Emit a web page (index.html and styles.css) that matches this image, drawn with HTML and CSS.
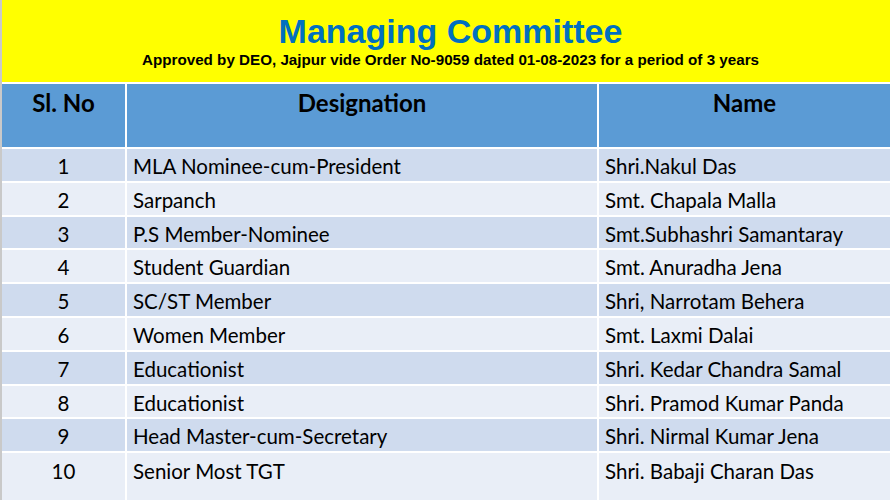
FILE: index.html
```html
<!DOCTYPE html>
<html>
<head>
<meta charset="utf-8">
<link rel="stylesheet" href="styles.css">
</head>
<body>
<div class="page">
  <header class="banner">
    <h1 class="title">Managing Committee</h1>
    <p class="subtitle">Approved by DEO, Jajpur vide Order No-9059 dated 01-08-2023 for a period of 3 years</p>
  </header>
  <div class="grid">
    <div class="th">Sl. No</div>
    <div class="th">Designation</div>
    <div class="th">Name</div>

    <div class="td num odd">1</div><div class="td odd">MLA Nominee-cum-President</div><div class="td odd">Shri.Nakul Das</div>
    <div class="td num even">2</div><div class="td even">Sarpanch</div><div class="td even">Smt. Chapala Malla</div>
    <div class="td num odd">3</div><div class="td odd">P.S Member-Nominee</div><div class="td odd">Smt.Subhashri Samantaray</div>
    <div class="td num even">4</div><div class="td even">Student Guardian</div><div class="td even">Smt. Anuradha Jena</div>
    <div class="td num odd">5</div><div class="td odd">SC/ST Member</div><div class="td odd">Shri, Narrotam Behera</div>
    <div class="td num even">6</div><div class="td even">Women Member</div><div class="td even">Smt. Laxmi Dalai</div>
    <div class="td num odd">7</div><div class="td odd">Educationist</div><div class="td odd">Shri. Kedar Chandra Samal</div>
    <div class="td num even">8</div><div class="td even">Educationist</div><div class="td even">Shri. Pramod Kumar Panda</div>
    <div class="td num odd">9</div><div class="td odd">Head Master-cum-Secretary</div><div class="td odd">Shri. Nirmal Kumar Jena</div>
    <div class="td num even last">10</div><div class="td even last">Senior Most TGT</div><div class="td even last">Shri. Babaji Charan Das</div>
  </div>
</div>
</body>
</html>
```
FILE: styles.css
```css
html, body {
  margin: 0;
  padding: 0;
  background: #ffffff;
}
.page {
  width: 888px;
  height: 500px;
  overflow: hidden;
  border-left: 2px solid #c9c9c9;
  background: #ffffff;
}
.banner {
  height: 82px;
  background: #ffff00;
  text-align: center;
  box-sizing: border-box;
  padding-top: 12px;
  padding-left: 9px;
  margin-bottom: 2px;
}
.title {
  margin: 0;
  font-family: "Liberation Sans", Arial, sans-serif;
  font-weight: bold;
  font-size: 34px;
  line-height: 38px;
  color: #0070c0;
}
.subtitle {
  margin: 0;
  font-family: "Liberation Sans", Arial, sans-serif;
  font-weight: bold;
  font-size: 15.2px;
  line-height: 20px;
  color: #000;
}
.grid {
  display: grid;
  grid-template-columns: 123px 470px 1fr;
  grid-template-rows: 63px repeat(9, 31.8px) 60px;
  gap: 2px 2px;
  font-family: Lato, "Noto Sans", sans-serif;
  color: #000;
}
.th {
  background: #5b9bd5;
  font-weight: bold;
  font-size: 24px;
  text-align: center;
  padding-top: 5px;
  line-height: 28px;
}
.td {
  font-size: 20.5px;
  line-height: 30px;
  padding-top: 2px;
  padding-left: 6px;
}
.num {
  text-align: center;
  padding-left: 0;
}
.odd { background: #cfdbee; }
.even { background: #e9eef7; }
.last { line-height: 34px; padding-top: 1px; }
```
